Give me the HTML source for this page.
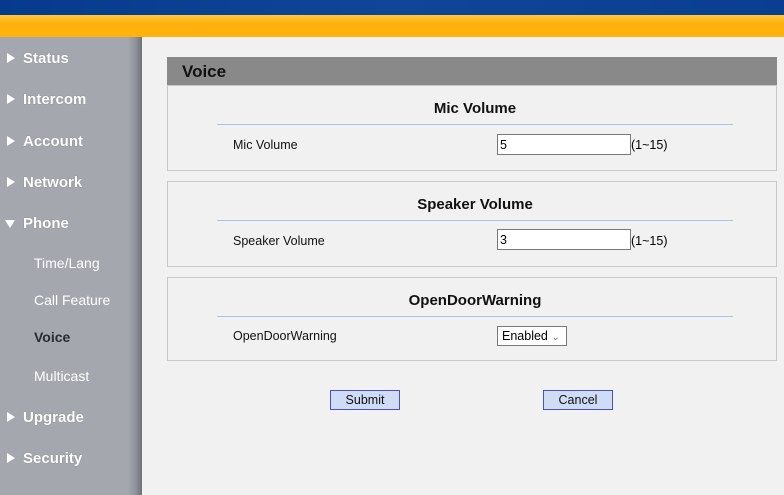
<!DOCTYPE html>
<html><head><style>
*{margin:0;padding:0;box-sizing:border-box}
body{width:784px;height:495px;overflow:hidden;position:relative;background:#f1f1f1;font-family:"Liberation Sans",sans-serif}
#hdr{position:absolute;left:0;top:0;width:784px;height:15px;background:linear-gradient(90deg,#063b8c,#0f4696 50%,#0a3f8f)}
#bar{position:absolute;left:0;top:15px;width:784px;height:22px;background:linear-gradient(#ffc93a,#ffb10e 40%,#ffb10e)}
#side{position:absolute;left:0;top:37px;width:142px;height:458px;background:linear-gradient(90deg,#a4a7ae 0,#a4a7ae 128px,#8e9198 136px,#6d7076 142px)}
.m{position:absolute;left:23px;color:#fff;font-weight:bold;font-size:15px;text-shadow:0 0 1px #777}
.m:before{content:"";position:absolute;left:-16px;top:3px;border-left:8px solid #fff;border-top:5px solid transparent;border-bottom:5px solid transparent}
.m.o:before{left:-18px;top:5px;border-top:8px solid #fff;border-left:5px solid transparent;border-right:5px solid transparent;border-bottom:0}
.s{position:absolute;left:34px;color:#fff;font-size:14px}
#title{position:absolute;left:167px;top:57px;width:610px;height:28px;background:#898989;font-weight:bold;font-size:17px;color:#111;padding:5px 0 0 15px}
.box{position:absolute;left:167px;width:610px;border:1px solid #c8c8c8}
.h{position:absolute;left:49px;width:516px;text-align:center;font-weight:bold;font-size:15px;color:#111}
.ln{position:absolute;left:49px;width:516px;height:1px;background:#a9c2e8}
.lb{position:absolute;left:65px;font-size:12.5px;color:#111}
.in{position:absolute;left:329px;width:134px;height:21px;border:1px solid #777;background:#fff;font-size:12.5px;padding:3px 0 0 2px}
.r{position:absolute;left:463px;font-size:12.5px}
.btn{position:absolute;top:390px;width:70px;height:20px;background:#cfdcf5;border:1px solid #4e4ec0;font-size:12.5px;text-align:center;padding-top:2px;color:#111}
</style></head><body>
<div id="hdr"></div><div id="bar"></div>
<div id="side">
<div class="m" style="top:13px">Status</div>
<div class="m" style="top:54px">Intercom</div>
<div class="m" style="top:96px">Account</div>
<div class="m" style="top:137px">Network</div>
<div class="m o" style="top:178px">Phone</div>
<div class="s" style="top:218px">Time/Lang</div>
<div class="s" style="top:255px">Call Feature</div>
<div class="s" style="top:292px;color:#2b2b33;font-weight:bold">Voice</div>
<div class="s" style="top:331px">Multicast</div>
<div class="m" style="top:372px">Upgrade</div>
<div class="m" style="top:413px">Security</div>
</div>
<div id="title">Voice</div>
<div class="box" style="top:85px;height:86px">
<div class="h" style="top:14px">Mic Volume</div><div class="ln" style="top:38px"></div>
<div class="lb" style="top:52px">Mic Volume</div><div class="in" style="top:48px">5</div><div class="r" style="top:52px">(1~15)</div>
</div>
<div class="box" style="top:181px;height:86px">
<div class="h" style="top:14px">Speaker Volume</div><div class="ln" style="top:38px"></div>
<div class="lb" style="top:52px">Speaker Volume</div><div class="in" style="top:47px">3</div><div class="r" style="top:52px">(1~15)</div>
</div>
<div class="box" style="top:277px;height:84px">
<div class="h" style="top:14px">OpenDoorWarning</div><div class="ln" style="top:38px"></div>
<div class="lb" style="top:51px">OpenDoorWarning</div>
<div class="in" style="top:48px;width:70px;height:20px;padding:2px 0 0 4px">Enabled <span style="color:#777;font-size:10px">&#8964;</span></div>
</div>
<div class="btn" style="left:330px">Submit</div>
<div class="btn" style="left:543px">Cancel</div>
</body></html>
